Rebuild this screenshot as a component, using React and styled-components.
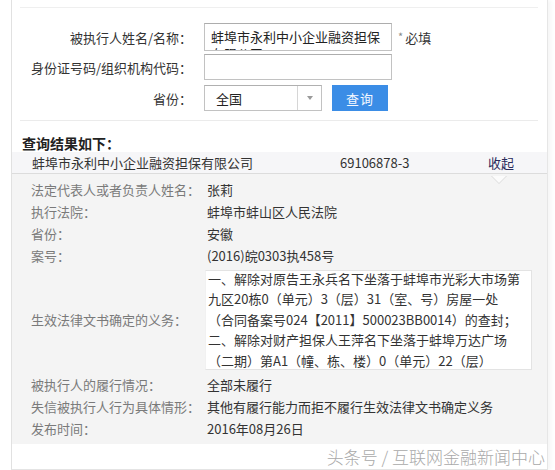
import React from "react";
import styled, { createGlobalStyle } from "styled-components";

const GlobalStyle = createGlobalStyle`
  html, body { margin: 0; padding: 0; background: #fff; }
  body {
    font-family: "Noto Sans CJK SC", "Microsoft YaHei", sans-serif;
    font-size: 13px;
    color: #333;
  }
  * { box-sizing: border-box; }
`;

const Page = styled.div`
  width: 555px;
  height: 470px;
  overflow: hidden;
  padding-left: 11px;
  background: #fff;
`;

const Panel = styled.div`
  width: 537px;
  height: 470px;
  border-left: 1px solid #e1e1e1;
  border-right: 1px solid #e6e6e6;
  border-bottom: 1px solid #e4e4e4;
  box-shadow: 3px 0 4px rgba(0, 0, 0, 0.04);
  padding-top: 7px;
  display: flex;
  flex-direction: column;
  background: #fff;
`;

const FormBox = styled.div`
  margin: 0 9px 0 8px;
  border-top: 1px solid #efefef;
  border-bottom: 1px solid #ebebeb;
  padding: 15px 0 9px;
  display: flex;
  flex-direction: column;
`;

const FormRow = styled.div`
  display: flex;
  align-items: center;
  height: ${(p) => p.$h}px;
  margin-top: ${(p) => p.$gap || 0}px;
`;

const FormLabel = styled.div`
  width: 172px;
  margin-right: 12px;
  text-align: right;
  color: #333;
  white-space: nowrap;
`;

const TextBox = styled.div`
  width: 188px;
  height: 100%;
  border: 1px solid #c2c2c2;
  border-top-color: #adadad;
  background: #fff;
  padding: 4px 6px 0;
  line-height: 17px;
  color: #222;
  overflow: hidden;
`;

const Required = styled.span`
  margin-left: 6px;
  color: #333;
  span {
    color: #888;
    font-size: 11px;
    margin-right: 2px;
    vertical-align: 2px;
  }
`;

const Select = styled.div`
  width: 118px;
  height: 100%;
  border: 1px solid #c2c2c2;
  border-top-color: #b0b0b0;
  display: flex;
  background: #fff;
`;

const SelectText = styled.div`
  flex: 1;
  padding-left: 11px;
  display: flex;
  align-items: center;
  color: #222;
`;

const SelectArrow = styled.div`
  width: 24px;
  border-left: 1px solid #d6d6d6;
  display: flex;
  align-items: center;
  justify-content: center;
  &::after {
    content: "";
    border-left: 3.5px solid transparent;
    border-right: 3.5px solid transparent;
    border-top: 4px solid #9a9a9a;
  }
`;

const QueryButton = styled.button`
  margin-left: 10px;
  width: 56px;
  height: 100%;
  border: none;
  background: #3b8de6;
  color: #f4f8ff;
  font-family: inherit;
  font-size: 13px;
  letter-spacing: 1px;
  padding: 0;
`;

const ResultTitle = styled.div`
  height: 31px;
  padding: 14px 0 0 10px;
  font-size: 14px;
  line-height: 17px;
  font-weight: bold;
  color: #222;
`;

const ResultHeader = styled.div`
  position: relative;
  height: 25px;
  background: #f6f6f8;
  border-bottom: 1px solid #dcdcdc;
  display: flex;
  align-items: center;
  padding-left: 20px;
  color: #333;
`;

const NameCell = styled.div`
  width: 308px;
  white-space: nowrap;
`;

const NumberCell = styled.div`
  width: 148px;
`;

const Toggle = styled.div`
  color: #2b2b5b;
`;

const Notch = styled.div`
  position: absolute;
  left: 479px;
  top: 24px;
  width: 16px;
  height: 8px;
  &::before {
    content: "";
    position: absolute;
    left: 0;
    top: 0;
    border-left: 8px solid transparent;
    border-right: 8px solid transparent;
    border-top: 8px solid #dadada;
  }
  &::after {
    content: "";
    position: absolute;
    left: 1px;
    top: 0;
    border-left: 7px solid transparent;
    border-right: 7px solid transparent;
    border-top: 7px solid #fbfbfb;
  }
`;

const DetailArea = styled.div`
  background: #f4f4f4;
  padding: 5px 0 4px 19px;
  display: flex;
  flex-direction: column;
`;

const DetailRow = styled.div`
  display: grid;
  grid-template-columns: 176px 1fr;
  align-items: center;
  line-height: 22px;
  margin-top: ${(p) => p.$gap || 0}px;
`;

const DetailLabel = styled.div`
  color: #7a7a7a;
  white-space: nowrap;
`;

const DetailValue = styled.div`
  color: #333;
  white-space: nowrap;
`;

const ScrollBox = styled.div`
  width: 327px;
  height: 100px;
  margin-left: -2px;
  background: #fff;
  border: 1px solid #e3e3e3;
  border-left-color: #f1f1f1;
  overflow-y: scroll;
  overflow-x: hidden;
  padding-left: 2px;
  &::-webkit-scrollbar {
    width: 10px;
  }
  &::-webkit-scrollbar-track {
    background: #fff;
    border-left: 1px solid #e9e9e9;
  }
  &::-webkit-scrollbar-thumb {
    background: #fdfdfd;
    border: 1px solid #dedede;
  }
`;

const ScrollContent = styled.div`
  margin-top: -2px;
  padding-bottom: 62px;
  line-height: 20.4px;
  color: #333;
`;

const Line = styled.div`
  white-space: nowrap;
`;

const Watermark = styled.div`
  flex: 1;
  display: flex;
  align-items: center;
  justify-content: flex-end;
  padding-right: 2px;
  font-size: 17px;
  font-weight: 300;
  color: #a9a9a9;
  white-space: nowrap;
`;

const details = [
  ["法定代表人或者负责人姓名：", "张莉"],
  ["执行法院：", "蚌埠市蚌山区人民法院"],
  ["省份：", "安徽"],
  ["案号：", "(2016)皖0303执458号"],
];

const duties = [
  "一、解除对原告王永兵名下坐落于蚌埠市光彩大市场第",
  "九区20栋0（单元）3（层）31（室、号）房屋一处",
  "（合同备案号024【2011】500023BB0014）的查封；",
  "二、解除对财产担保人王萍名下坐落于蚌埠万达广场",
  "（二期）第A1（幢、栋、楼）0（单元）22（层）",
];

const after = [
  ["被执行人的履行情况：", "全部未履行"],
  ["失信被执行人行为具体情形：", "其他有履行能力而拒不履行生效法律文书确定义务"],
  ["发布时间：", "2016年08月26日"],
];

export default function App() {
  return (
    <>
      <GlobalStyle />
      <Page>
        <Panel>
          <FormBox>
            <FormRow $h={28}>
              <FormLabel>被执行人姓名/名称：</FormLabel>
              <TextBox>蚌埠市永利中小企业融资担保有限公司</TextBox>
              <Required>
                <span>*</span>必填
              </Required>
            </FormRow>
            <FormRow $h={26} $gap={3}>
              <FormLabel>身份证号码/组织机构代码：</FormLabel>
              <TextBox />
            </FormRow>
            <FormRow $h={26} $gap={5}>
              <FormLabel>省份：</FormLabel>
              <Select>
                <SelectText>全国</SelectText>
                <SelectArrow />
              </Select>
              <QueryButton>查询</QueryButton>
            </FormRow>
          </FormBox>

          <ResultTitle>查询结果如下：</ResultTitle>

          <ResultHeader>
            <NameCell>蚌埠市永利中小企业融资担保有限公司</NameCell>
            <NumberCell>69106878-3</NumberCell>
            <Toggle>收起</Toggle>
            <Notch />
          </ResultHeader>

          <DetailArea>
            {details.map(([k, v]) => (
              <DetailRow key={k}>
                <DetailLabel>{k}</DetailLabel>
                <DetailValue>{v}</DetailValue>
              </DetailRow>
            ))}
            <DetailRow $gap={3}>
              <DetailLabel>生效法律文书确定的义务：</DetailLabel>
              <ScrollBox>
                <ScrollContent>
                  {duties.map((l) => (
                    <Line key={l}>{l}</Line>
                  ))}
                </ScrollContent>
              </ScrollBox>
            </DetailRow>
            {after.map(([k, v], i) => (
              <DetailRow key={k} $gap={i === 0 ? 4 : 0}>
                <DetailLabel>{k}</DetailLabel>
                <DetailValue>{v}</DetailValue>
              </DetailRow>
            ))}
          </DetailArea>

          <Watermark>头条号 / 互联网金融新闻中心</Watermark>
        </Panel>
      </Page>
    </>
  );
}
